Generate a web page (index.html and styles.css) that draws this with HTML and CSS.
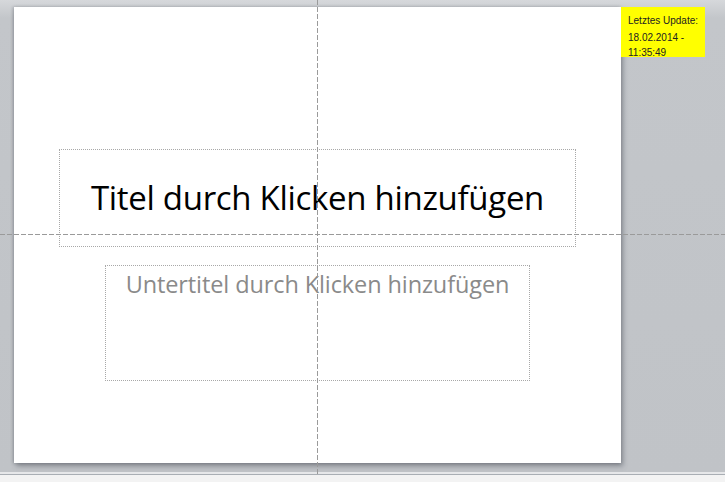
FILE: index.html
```html
<!DOCTYPE html>
<html lang="de">
<head>
    <meta charset="UTF-8">
    <title>Folie 1</title>
    <link rel="stylesheet" href="styles.css">
</head>
<body>

    <div class="workspace">
        <div class="slide">
            <div class="placeholder title-box">
                <h1>Titel durch Klicken hinzufügen</h1>
            </div>
            <div class="placeholder subtitle-box">
                <p>Untertitel durch Klicken hinzufügen</p>
            </div>
        </div>

        <!-- guides over the slide -->
        <div class="guide guide-v"></div>
        <div class="guide guide-h"></div>

        <div class="update-note">
            <p>Letztes Update:</p>
            <p>18.02.2014 -<br>11:35:49</p>
        </div>
    </div>

    <div class="statusbar"></div>

</body>
</html>
```

FILE: styles.css
```css
body {
    margin: 0;
    font-family: "Open Sans", "DejaVu Sans", sans-serif;
    background-color: #f3f3f3;
    overflow: hidden;
}

.workspace {
    position: relative;
    height: 472px;
    padding: 7px 0 0 14px;
    box-sizing: border-box;
    background: linear-gradient(#d6d8db, #c3c6ca 18px, #c0c3c7);
}

.slide {
    width: 607px;
    height: 456px;
    background-color: #fff;
    box-shadow: 2px 3px 5px rgba(60, 65, 75, 0.45), -1px 0 3px rgba(60, 65, 75, 0.3);
    padding-top: 142px;
    box-sizing: border-box;
}

.placeholder {
    border: 1px dotted #a8a8a8;
    box-sizing: border-box;
}

.title-box {
    width: 517px;
    height: 98px;
    margin-left: 45px;
    display: flex;
    align-items: center;
    justify-content: center;
}

.title-box h1 {
    margin: 0 0 2px;
    font-weight: normal;
    font-size: 33px;
    color: #000;
    letter-spacing: -0.3px;
}

.subtitle-box {
    width: 425px;
    height: 116px;
    margin: 18px 0 0 91px;
    text-align: center;
}

.subtitle-box p {
    margin: 2px 0 0;
    font-size: 23.5px;
    color: #8a8a8a;
    letter-spacing: -0.1px;
}

.guide {
    position: absolute;
}

.guide-v {
    left: 317px;
    top: 0;
    width: 1px;
    height: 476px;
    background: repeating-linear-gradient(#9a9a9a 0 5px, transparent 5px 7px);
}

.guide-h {
    left: 0;
    top: 234px;
    width: 100%;
    height: 1px;
    background: repeating-linear-gradient(90deg, #9a9a9a 0 5px, transparent 5px 7px);
}

.update-note {
    position: absolute;
    left: 621px;
    top: 7px;
    width: 84px;
    height: 50px;
    box-sizing: border-box;
    padding: 6px 0 0 7px;
    background-color: #ffff00;
    font-family: "Liberation Sans", Arial, sans-serif;
    font-size: 10px;
    line-height: 15px;
    color: #222;
}

.update-note p {
    margin: 0 0 2px;
}

.statusbar {
    height: 10px;
    border-top: 2px solid #e6e7e9;
    box-shadow: inset 0 1px 0 #a9aeb4;
    background-color: #f3f3f3;
}
```
